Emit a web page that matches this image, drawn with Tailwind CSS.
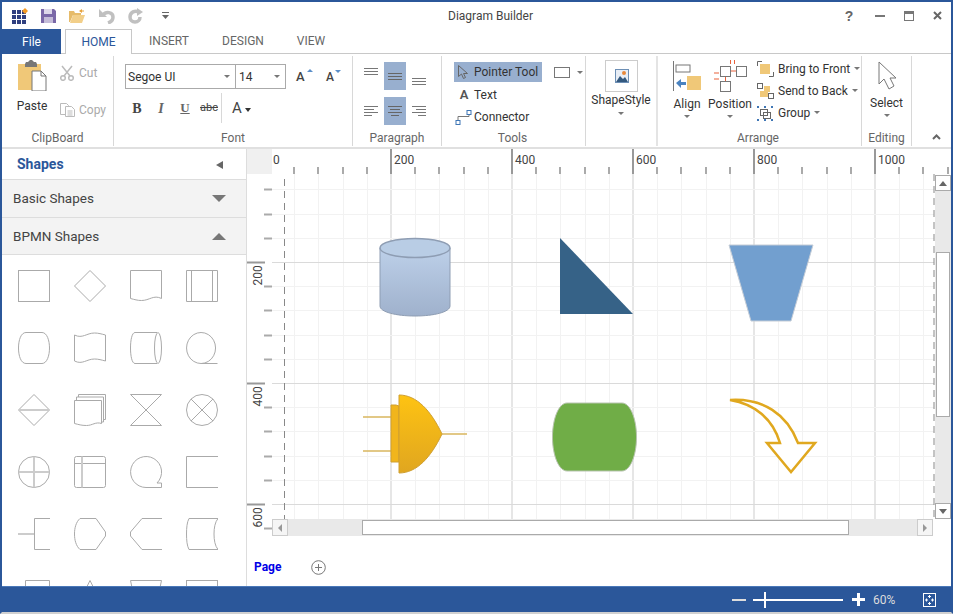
<!DOCTYPE html>
<html lang="en">
  <head>
    <meta charset="UTF-8" />
    <title>Diagram Builder</title>
    <script src="https://cdn.jsdelivr.net/npm/@tailwindcss/browser@4"></script>
  </head>
  <body class="bg-white">
    <div class="w-[953px] h-[614px] border-2 border-[#2b579a] border-b-[#d0d0d0] flex flex-col overflow-hidden font-['Roboto',sans-serif] text-[12px] text-[#444] bg-white">
      <!-- title bar -->
      <div class="h-[27px] flex items-center relative shrink-0">
        <div class="flex items-center pl-[10px] gap-[13px]">
          <svg width="16" height="16" viewBox="0 0 16 16">
            <g fill="#2f3f7f">
              <rect x="0" y="2" width="4" height="4"/><rect x="5" y="2" width="4" height="4"/><rect x="10" y="2" width="4" height="4"/>
              <rect x="0" y="7" width="4" height="4"/><rect x="5" y="7" width="4" height="4"/><rect x="10" y="7" width="4" height="4"/>
              <rect x="0" y="12" width="4" height="4"/><rect x="5" y="12" width="4" height="4"/><rect x="10" y="12" width="4" height="4"/>
            </g>
            <path d="M13 0l3 3-3 3-3-3z" fill="#f59a23"/>
          </svg>
          <svg width="15" height="15" viewBox="0 0 15 15"><path d="M0 1h13l2 2v12H0z" fill="#7a68a8"/><rect x="3" y="1" width="8" height="5" fill="#ddd8ea"/><rect x="3" y="9" width="9" height="6" fill="#c4bcd8"/></svg>
          <svg width="16" height="14" viewBox="0 0 16 14"><path d="M0 2h5l1 2h6v2H4L1 13H0z" fill="#e6bb6a"/><path d="M4 6h12l-3 8H1z" fill="#f2cf8a"/><path d="M10 2l3-2v1.500h2v1h-2V4z" fill="#e6a23c"/></svg>
          <svg width="17" height="16" viewBox="0 0 17 16" fill="none" stroke="#c0c0c0" stroke-width="3.500"><path d="M5 7c3-4 10-3 10 2 0 3-2 5-5 6"/><path d="M1 1v8h8z" fill="#c0c0c0" stroke="none"/></svg>
          <svg width="16" height="16" viewBox="0 0 16 16" fill="none" stroke="#c0c0c0" stroke-width="3.500"><path d="M11 4C7 2 2 4 2 9c0 3 2 5 5 5s5-2 5-5"/><path d="M9 0v8l6-4z" fill="#c0c0c0" stroke="none"/></svg>
          <svg class="ml-[5px]" width="7" height="7" viewBox="0 0 7 7"><rect y="0" width="7" height="1" fill="#666"/><path d="M0 3h7L3.500 7z" fill="#666"/></svg>
        </div>
        <div class="absolute left-[446px] top-[6px] text-[#444] leading-4">Diagram Builder</div>
        <div class="ml-auto flex items-center pr-[9px]">
          <span class="w-[10px] text-center font-bold text-[14px] text-[#666] leading-none font-['Liberation_Sans',sans-serif] mr-[21px]">?</span>
          <span class="w-[10px] h-[2px] bg-[#777] mr-[19px]"></span>
          <span class="w-[10px] h-[10px] border border-[#777] border-t-[3px] mr-[19px]"></span>
          <svg width="9" height="9" viewBox="0 0 9 9" stroke="#666" stroke-width="2"><path d="M1 1l7 7M8 1l-7 7"/></svg>
        </div>
      </div>
      <!-- tabs -->
      <div class="h-[25px] flex items-stretch shrink-0 border-b border-[#c8c8c8] text-[#666]">
        <div class="w-[59px] -mb-px bg-[#2b579a] text-white flex items-center justify-center">File</div>
        <div class="ml-[4px] w-[67px] -mb-px bg-white border border-b-0 border-[#c8c8c8] text-[#2b579a] flex items-center justify-center">HOME</div>
        <div class="ml-[16px] w-[42px] flex items-center justify-center">INSERT</div>
        <div class="ml-[31px] w-[44px] flex items-center justify-center">DESIGN</div>
        <div class="ml-[30px] w-[32px] flex items-center justify-center">VIEW</div>
      </div>
      <!-- ribbon -->
      <div class="h-[95px] shrink-0 flex border-b-2 border-[#e0e0e0] pt-[2px]">
        <!-- clipboard -->
        <div class="w-[112px] border-r border-[#d8d8d8] flex flex-col mb-px">
          <div class="flex-1 flex pl-[12px] pt-[4px]">
            <div class="w-[36px] flex flex-col items-center">
              <svg width="30" height="31" viewBox="0 0 30 31">
                <path d="M1 4h23v26H1z" fill="#f0c878"/>
                <path d="M8 4l1-2h2l2-2h2l2 2h2l1 2v3H8z" fill="#777"/>
                <path d="M15 11h9l5 5v15H15z" fill="#fff" stroke="#777"/>
                <path d="M24 11v5h5" fill="none" stroke="#777"/>
              </svg>
              <span class="mt-[6px] text-[#333]">Paste</span>
            </div>
            <div class="ml-[10px] flex flex-col text-[#aaa]">
              <div class="flex items-center gap-[4px] mt-[4px] h-[18px]">
                <svg width="15" height="16" viewBox="0 0 15 16" fill="none" stroke="#bbb" stroke-width="1.500"><path d="M2 1l8 10M12 1L4 11"/><circle cx="3" cy="13" r="2.300"/><circle cx="11" cy="13" r="2.300"/></svg>
                <span>Cut</span>
              </div>
              <div class="flex items-center gap-[4px] mt-[19px] h-[18px]">
                <svg width="15" height="14" viewBox="0 0 15 14" fill="#fff" stroke="#bbb"><path d="M.5.500h6l2 2v9h-8z"/><path d="M5.500 3.500h6l3 3v7h-9z"/><path d="M7.500 8h5M7.500 10h5M7.500 12h5" fill="none"/></svg>
                <span>Copy</span>
              </div>
            </div>
          </div>
          <div class="h-[18px] leading-[20px] text-center text-[#666]">ClipBoard</div>
        </div>
        <!-- font -->
        <div class="w-[239px] border-r border-[#d8d8d8] flex flex-col mb-px pl-[11px]">
          <div class="flex-1">
            <div class="flex items-center mt-[8px]">
              <div class="w-[111px] h-[25px] border border-[#aaa] flex items-center pl-[2px] pr-[5px] justify-between text-[#333]">
                <span>Segoe UI</span><span class="w-0 h-0 border-x-[3px] border-x-transparent border-t-[3px] border-t-[#777]"></span>
              </div>
              <div class="w-[50px] h-[25px] border border-l-0 border-[#aaa] flex items-center pl-[3px] pr-[5px] justify-between text-[#333]">
                <span>14</span><span class="w-0 h-0 border-x-[3px] border-x-transparent border-t-[3px] border-t-[#777]"></span>
              </div>
              <div class="ml-[10px] relative w-[14px] text-[13px] text-[#444] font-medium leading-none">A<span class="absolute -right-[3px] -top-[1px] w-0 h-0 border-x-[3px] border-x-transparent border-b-[3px] border-b-[#5b8fc9]"></span></div>
              <div class="ml-[16px] relative w-[12px] text-[12px] text-[#444] font-medium leading-none">A<span class="absolute -right-[3px] -top-[1px] w-0 h-0 border-x-[3px] border-x-transparent border-t-[3px] border-t-[#5b8fc9]"></span></div>
            </div>
            <div class="flex items-center mt-[4px] h-[30px] font-['Liberation_Serif',serif]">
              <div class="w-[12px] ml-[6px] text-center font-bold text-[14px] text-[#444]">B</div>
              <div class="w-[12px] ml-[12px] text-center font-bold italic text-[14px] text-[#666]">I</div>
              <div class="w-[12px] ml-[12px] text-center font-bold underline text-[13px] text-[#666]">U</div>
              <div class="w-[18px] ml-[9px] text-center line-through text-[11px] text-[#444] font-['Roboto',sans-serif]">abc</div>
              <div class="h-[30px] w-px bg-[#d8d8d8] ml-[3px]"></div>
              <div class="ml-[10px] text-[15px] text-[#444] font-['Roboto',sans-serif]">A</div>
              <span class="ml-[3px] mt-[3px] w-0 h-0 border-x-[3px] border-x-transparent border-t-[4px] border-t-[#333]"></span>
            </div>
          </div>
          <div class="h-[18px] leading-[20px] text-center text-[#666] -ml-[11px]">Font</div>
        </div>
        <!-- paragraph -->
        <div class="w-[89px] border-r border-[#d8d8d8] flex flex-col mb-px">
          <div class="flex-1 grid grid-cols-[20px_22px_20px] grid-rows-[28px_28px] gap-x-[3px] gap-y-[7px] pl-[8px] pt-[6px] justify-start">
            <div class="flex items-start justify-center pt-[6px]"><svg width="14" height="7" stroke="#777"><path d="M0 .5h14M0 3.500h14M0 6.500h14"/></svg></div>
            <div class="bg-[#98afcf] flex items-center justify-center"><svg width="14" height="7" stroke="#666"><path d="M0 .5h14M0 3.500h14M0 6.500h14"/></svg></div>
            <div class="flex items-end justify-center pb-[5px]"><svg width="14" height="7" stroke="#777"><path d="M0 .5h14M0 3.500h14M0 6.500h14"/></svg></div>
            <div class="flex items-center justify-center"><svg width="14" height="10" stroke="#777"><path d="M0 .5h14M0 3.500h10M0 6.500h14M0 9.500h8"/></svg></div>
            <div class="bg-[#98afcf] flex items-center justify-center"><svg width="14" height="10" stroke="#666"><path d="M0 .5h14M2 3.500h10M0 6.500h14M3 9.500h8"/></svg></div>
            <div class="flex items-center justify-center"><svg width="14" height="10" stroke="#777"><path d="M0 .5h14M4 3.500h10M0 6.500h14M6 9.500h8"/></svg></div>
          </div>
          <div class="h-[18px] leading-[20px] text-center text-[#666]">Paragraph</div>
        </div>
        <!-- tools -->
        <div class="w-[144px] border-r border-[#d8d8d8] flex flex-col mb-px">
          <div class="flex-1 pl-[12px] pt-[6px] text-[#333]">
            <div class="flex items-center">
              <div class="w-[88px] h-[20px] bg-[#98afcf] flex items-center pl-[4px]">
                <svg width="10" height="14" viewBox="0 0 10 14" fill="none" stroke="#666"><path d="M.5.5v11l3-2.500 2 4.500 2-1-2-4h4z"/></svg>
                <span class="ml-[6px]">Pointer Tool</span>
              </div>
              <div class="ml-[12px] w-[16px] h-[11px] border border-[#777]"></div>
              <span class="ml-[7px] w-0 h-0 border-x-[3px] border-x-transparent border-t-[3px] border-t-[#777]"></span>
            </div>
            <div class="flex items-center h-[22px] mt-[2px]">
              <span class="w-[20px] text-center font-semibold text-[#555] text-[13px]">A</span>
              <span>Text</span>
            </div>
            <div class="flex items-center h-[22px]">
              <svg class="w-[20px]" width="17" height="15" viewBox="0 0 17 15" fill="#fff" stroke="#3f76b5"><path d="M2.500 10V6.500h11V3" fill="none" stroke="#777"/><rect x="11.500" y=".5" width="4" height="4"/><rect x=".5" y="10.500" width="4" height="4"/></svg>
              <span>Connector</span>
            </div>
          </div>
          <div class="h-[18px] leading-[20px] text-center text-[#666] pr-[2px]">Tools</div>
        </div>
        <!-- shape style -->
        <div class="w-[72px] border-r-2 border-[#e4e4e4] flex flex-col items-center mb-px pt-[4px]">
          <div class="w-[33px] h-[32px] border border-[#ccc] flex items-center justify-center ml-[1px]">
            <svg width="14" height="14" viewBox="0 0 14 14"><rect x=".5" y=".5" width="13" height="13" fill="#e8eef6" stroke="#6d8fb5"/><path d="M1 13l4-6 3 3 2-2 3 5z" fill="#33597f"/><circle cx="9" cy="4" r="2" fill="#e8883a"/></svg>
          </div>
          <span class="mt-px text-[#333] leading-[15px] whitespace-nowrap">ShapeStyle</span>
          <span class="mt-[4px] w-0 h-0 border-x-[3px] border-x-transparent border-t-[3px] border-t-[#777]"></span>
        </div>
        <!-- arrange -->
        <div class="w-[204px] border-r border-[#d8d8d8] flex flex-col mb-px">
          <div class="flex-1 flex pl-[14px] pt-[4px] text-[#333]">
            <div class="w-[30px] flex flex-col items-center">
              <svg width="28" height="32" viewBox="0 0 28 32">
                <path d="M.5 1v30" stroke="#777" fill="none"/>
                <rect x="3" y="5" width="14" height="7" fill="#fff" stroke="#777"/>
                <rect x="14" y="16" width="14" height="14" fill="#f0c878"/>
                <path d="M3 23l5-4v3h5v3H8v3z" fill="#4a83c0"/>
              </svg>
              <span class="leading-[17px] mt-[4px]">Align</span>
              <span class="mt-[2px] w-0 h-0 border-x-[3px] border-x-transparent border-t-[3px] border-t-[#777]"></span>
            </div>
            <div class="w-[44px] ml-[6px] flex flex-col items-center">
              <svg width="34" height="32" viewBox="0 0 34 32" fill="#fff" stroke="#777">
                <rect x="7.500" y="6.500" width="10" height="10"/>
                <rect x="23.500" y="6.500" width="10" height="10"/>
                <rect x="7.500" y="21.500" width="10" height="10"/>
                <path d="M18 11h5M12.500 17v4" fill="none" stroke="#e8603a"/>
                <path d="M17.500 0v4M21.500 0v4M1 13h5M1 19h5" fill="none" stroke="#e8603a"/>
              </svg>
              <span class="leading-[17px] mt-[4px]">Position</span>
              <span class="mt-[2px] w-0 h-0 border-x-[3px] border-x-transparent border-t-[3px] border-t-[#777]"></span>
            </div>
            <div class="ml-[5px] flex flex-col -mt-[2px]">
              <div class="flex items-center h-[22px] whitespace-nowrap">
                <svg width="17" height="16" viewBox="0 0 17 16" fill="none" stroke="#666"><path d="M.5 5V.5H5M16.500 11v4.500H12"/><rect x="3" y="3" width="10" height="10" fill="#f0c878" stroke="none"/></svg>
                <span class="ml-[4px]">Bring to Front</span>
                <span class="ml-[4px] mb-[2px] w-0 h-0 border-x-[3px] border-x-transparent border-t-[3px] border-t-[#777]"></span>
              </div>
              <div class="flex items-center h-[22px] whitespace-nowrap">
                <svg width="17" height="16" viewBox="0 0 17 16" fill="#fff" stroke="#666"><rect x=".5" y=".5" width="5" height="5"/><rect x="11.500" y="10.500" width="5" height="5"/><rect x="7" y="3" width="6" height="6" fill="#f0c878" stroke="none"/><rect x="3" y="8" width="8" height="6" fill="#f0c878" stroke="none"/></svg>
                <span class="ml-[4px]">Send to Back</span>
                <span class="ml-[4px] mb-[2px] w-0 h-0 border-x-[3px] border-x-transparent border-t-[3px] border-t-[#777]"></span>
              </div>
              <div class="flex items-center h-[22px] whitespace-nowrap">
                <svg width="16" height="15" viewBox="0 0 16 15" fill="none" stroke="#666"><rect x="3.500" y="3.500" width="7" height="6"/><rect x="6.500" y="6.500" width="7" height="6"/><g fill="#3f76b5" stroke="none"><rect width="2" height="2"/><rect x="14" width="2" height="2"/><rect y="13" width="2" height="2"/><rect x="14" y="13" width="2" height="2"/><rect x="7" width="2" height="2"/><rect x="7" y="13" width="2" height="2"/></g></svg>
                <span class="ml-[5px]">Group</span>
                <span class="ml-[4px] mb-[2px] w-0 h-0 border-x-[3px] border-x-transparent border-t-[3px] border-t-[#777]"></span>
              </div>
            </div>
          </div>
          <div class="h-[18px] leading-[20px] text-center text-[#666] -ml-[3px]">Arrange</div>
        </div>
        <!-- editing -->
        <div class="w-[50px] border-r border-[#d8d8d8] flex flex-col items-center mb-px pt-[5px] text-[#333]">
          <svg width="20" height="30" viewBox="0 0 20 30" fill="#fff" stroke="#777"><path d="M2 1v22l5-5 5 10 5-3-4-8h6z"/></svg>
          <span class="leading-[17px] mt-[4px]">Select</span>
          <span class="mt-[2px] w-0 h-0 border-x-[3px] border-x-transparent border-t-[3px] border-t-[#777]"></span>
          <span class="mt-auto h-[18px] leading-[20px] text-[#666]">Editing</span>
        </div>
        <div class="flex-1 flex items-end justify-end pr-[10px] pb-[7px]">
          <svg width="9" height="6" viewBox="0 0 9 6" fill="none" stroke="#666" stroke-width="2"><path d="M1 5l3.500-3.500L8 5"/></svg>
        </div>
      </div>
      <!-- body -->
      <div class="flex-1 flex min-h-0">
        <!-- shapes panel -->
        <div class="w-[245px] shrink-0 border-r border-[#ddd] flex flex-col overflow-hidden">
          <div class="h-[30px] shrink-0 flex items-center justify-between pl-[15px] pr-[23px] pt-px">
            <span class="text-[14px] font-bold text-[#2b579a]">Shapes</span>
            <span class="w-0 h-0 border-y-[4px] border-y-transparent border-r-[7px] border-r-[#666]"></span>
          </div>
          <div class="h-[38px] shrink-0 bg-[#f3f3f3] border-t border-[#ddd] flex items-center justify-between pl-[11px] pr-[20px] text-[13.500px] text-[#444]">
            <span>Basic Shapes</span>
            <span class="w-0 h-0 border-x-[7px] border-x-transparent border-t-[7px] border-t-[#777]"></span>
          </div>
          <div class="h-[38px] shrink-0 bg-[#f3f3f3] border-y border-[#ddd] flex items-center justify-between pl-[11px] pr-[20px] text-[13.500px] text-[#444]">
            <span>BPMN Shapes</span>
            <span class="w-0 h-0 border-x-[7px] border-x-transparent border-b-[7px] border-b-[#777]"></span>
          </div>
          <div class="grid grid-cols-[32px_32px_32px_32px] gap-x-[24px] gap-y-[30px] pl-[16px] pt-[15px]">
            <svg width="32" height="32" viewBox="0 0 32 32" fill="none" stroke="#aaa"><rect x=".5" y=".5" width="31" height="31"/></svg>
            <svg width="32" height="32" viewBox="0 0 32 32" fill="none" stroke="#aaa"><path d="M16 .5L31.500 16 16 31.500.5 16z"/></svg>
            <svg width="32" height="32" viewBox="0 0 32 32" fill="none" stroke="#aaa"><path d="M.5.500h31v28c-8-4-12 2-20 2-4 0-7-1-11-2z"/></svg>
            <svg width="32" height="32" viewBox="0 0 32 32" fill="none" stroke="#aaa"><path d="M.5.500h31v31H.5zM5.500.500v31M26.500.500v31"/></svg>

            <svg width="32" height="32" viewBox="0 0 32 32" fill="none" stroke="#aaa"><path d="M8 .5h16c5 0 7.500 8 7.500 15.500S29 31.500 24 31.500H8C3 31.500.5 24 .5 16S3 .5 8 .5z"/></svg>
            <svg width="32" height="32" viewBox="0 0 32 32" fill="none" stroke="#aaa"><path d="M.5 3c8 4 12-2 20-2 4 0 7 1 11 2v26c-4-1-7-2-11-2-8 0-12 6-20 2z"/></svg>
            <svg width="32" height="32" viewBox="0 0 32 32" fill="none" stroke="#aaa"><path d="M5 .5h22M5 31.500h22M5 .5C2 .5.500 8 .5 16S2 31.500 5 31.500"/><ellipse cx="28" cy="16" rx="3.500" ry="15.500"/></svg>
            <svg width="32" height="32" viewBox="0 0 32 32" fill="none" stroke="#aaa"><path d="M15 31.500a14.500 15.500 0 1 1 .1 0H31.500"/></svg>

            <svg width="32" height="32" viewBox="0 0 32 32" fill="none" stroke="#aaa"><path d="M16 .5L31.500 16 16 31.500.5 16z"/><path d="M1 16h30" stroke="#ccc" stroke-width="2"/></svg>
            <svg width="32" height="32" viewBox="0 0 32 32" fill="#fff" stroke="#aaa"><path d="M4.500.5h27v25h-27z"/><path d="M2.500 3h27v25h-27z"/><path d="M.5 6.500h27v23c-6-2-9 2-15 2-5 0-8-1-12-2z"/></svg>
            <svg width="32" height="32" viewBox="0 0 32 32" fill="none" stroke="#aaa"><path d="M.5.500h31l-31 31h31z"/></svg>
            <svg width="32" height="32" viewBox="0 0 32 32" fill="none" stroke="#aaa"><circle cx="16" cy="16" r="15.500"/><path d="M5 5l22 22M27 5L5 27"/></svg>

            <svg width="32" height="32" viewBox="0 0 32 32" fill="none" stroke="#aaa"><circle cx="16" cy="16" r="15.500"/><path d="M16 .5v31M.5 16h31" stroke="#ccc" stroke-width="2"/></svg>
            <svg width="32" height="32" viewBox="0 0 32 32" fill="none" stroke="#aaa"><rect x=".5" y=".5" width="31" height="31" rx="2"/><path d="M.5 7.500h31"/><path d="M8 .5v31" stroke="#ccc" stroke-width="2"/></svg>
            <svg width="32" height="32" viewBox="0 0 32 32" fill="none" stroke="#aaa"><path d="M16 31.500a15.500 15.500 0 1 1 11-4.500h4.500v4.500z"/></svg>
            <svg width="32" height="32" viewBox="0 0 32 32" fill="none" stroke="#aaa"><path d="M32 .5H.5v31H32"/></svg>

            <svg width="32" height="32" viewBox="0 0 32 32" fill="none" stroke="#aaa"><path d="M32 .5H16.500v31H32"/><path d="M0 16h16" stroke="#ccc" stroke-width="2"/></svg>
            <svg width="32" height="32" viewBox="0 0 32 32" fill="none" stroke="#aaa"><path d="M6 .5h16L31.500 14v4L22 31.500H6C2 28 .5 22 .5 16S2 4 6 .5z"/></svg>
            <svg width="32" height="32" viewBox="0 0 32 32" fill="none" stroke="#aaa"><path d="M32 .5H12L.5 14v4L12 31.500h20"/></svg>
            <svg width="32" height="32" viewBox="0 0 32 32" fill="none" stroke="#aaa"><path d="M32 .5H3C1 4 .5 10 .5 16S1 28 3 31.500h29C29 28 28 22 28 16s1-12 4-15.500"/></svg>

            <svg width="32" height="32" viewBox="0 0 32 32" fill="none" stroke="#aaa"><path d="M7.500.5h24v31H7.500z"/></svg>
            <svg width="32" height="32" viewBox="0 0 32 32" fill="none" stroke="#aaa"><path d="M16 .5L31.500 31.500H.5z"/></svg>
            <svg width="32" height="32" viewBox="0 0 32 32" fill="none" stroke="#aaa"><path d="M.5.500h31L25 31H7z"/></svg>
            <svg width="32" height="32" viewBox="0 0 32 32" fill="none" stroke="#aaa"><rect x=".5" y=".5" width="31" height="31"/></svg>
          </div>
        </div>
        <!-- diagram area -->
        <div class="flex-1 flex flex-col min-w-0">
          <div class="relative h-[387px] shrink-0">
            <svg id="canvas" width="704" height="387" viewBox="247 149 704 387" class="bg-white">
              <g id="grid"></g>
              <path d="M284.500 179V519M934 174V519" stroke="#888" stroke-dasharray="7 5" fill="none"/>
              <defs>
                <linearGradient id="cyl" x1="0" y1="0" x2="0" y2="1"><stop offset="0" stop-color="#bdd0e9"/><stop offset="1" stop-color="#9fb1cc"/></linearGradient>
                <linearGradient id="gate" x1="0" y1="0" x2="0" y2="1"><stop offset="0" stop-color="#fec312"/><stop offset="1" stop-color="#e0a620"/></linearGradient>
              </defs>
              <!-- database -->
              <path d="M380 248v58c0 6 16 10 35 10s35-4 35-10v-58z" fill="url(#cyl)" stroke="#8e9db3"/>
              <ellipse cx="415" cy="248" rx="35" ry="9.500" fill="#b9cde5" stroke="#8e9db3" stroke-width="1.500"/>
              <!-- triangle -->
              <path d="M560 238l73 76h-73z" fill="#366287"/>
              <!-- trapezoid -->
              <path d="M729 245h84l-22 76h-40z" fill="#729fcf" stroke="#c4ccd6"/>
              <!-- or gate -->
              <path d="M363 417h28M363 451h28M442 434h25" stroke="#d9b65f" stroke-width="1.500" fill="none"/>
              <path d="M391 405h5l3 1v56h-8z" fill="#f1b51c" stroke="#cf9f30"/>
              <path d="M399 395c18 0 32 16 43 39-11 23-25 39-43 39z" fill="url(#gate)" stroke="#cf9f30"/>
              <!-- rounded barrel -->
              <path d="M567 403h55c8 0 14.500 15 14.500 34s-6.500 34-14.500 34h-55c-8 0-14.500-15-14.500-34s6.500-34 14.500-34z" fill="#70ad47" stroke="#b8c4b0"/>
              <!-- curved arrow -->
              <path d="M730 400c33-2 57 14 68 43h17l-24 29-24-29h13c-7-24-25-39-50-43z" fill="#fff" stroke="#e0a81f" stroke-width="2.500"/>
              <g id="rulers" font-family="Roboto, sans-serif" font-size="12" fill="#444"></g>
            </svg>
            <!-- vertical scrollbar -->
            <div class="absolute right-0 top-[26px] h-[344px] w-[16px] bg-[#e9e9e9] flex flex-col">
              <div class="h-[16px] bg-white border border-[#aaa] flex items-center justify-center"><span class="w-0 h-0 border-x-[4px] border-x-transparent border-b-[5px] border-b-[#666]"></span></div>
              <div class="h-[165px] mt-[61px] mx-px bg-white border border-[#aaa]"></div>
              <div class="h-[16px] mt-auto bg-white border border-[#aaa] flex items-center justify-center"><span class="w-0 h-0 border-x-[4px] border-x-transparent border-t-[5px] border-t-[#666]"></span></div>
            </div>
            <!-- horizontal scrollbar -->
            <div class="absolute left-[25px] bottom-0 h-[17px] w-[661px] bg-[#e9e9e9] flex">
              <div class="w-[16px] bg-[#f5f5f5] border border-[#ccc] flex items-center justify-center"><span class="w-0 h-0 border-y-[4px] border-y-transparent border-r-[4px] border-r-[#999]"></span></div>
              <div class="w-[487px] ml-[74px] my-px bg-white border border-[#aaa]"></div>
              <div class="w-[16px] ml-auto bg-[#f5f5f5] border border-[#ccc] flex items-center justify-center"><span class="w-0 h-0 border-y-[4px] border-y-transparent border-l-[4px] border-l-[#999]"></span></div>
            </div>
          </div>
          <!-- page tabs -->
          <div class="flex-1 flex items-center pl-[7px] pt-[12px]">
            <span class="font-bold text-[#0000e6]">Page</span>
            <svg class="ml-[30px]" width="15" height="15" viewBox="0 0 15 15" fill="none" stroke="#777"><circle cx="7.500" cy="7.500" r="6.800"/><path d="M4 7.500h7M7.500 4v7"/></svg>
          </div>
        </div>
      </div>
      <!-- status bar -->
      <div class="h-[26px] shrink-0 bg-[#2b579a] border-t border-[#4a78b8] flex items-center justify-end text-white pr-[15px]">
        <span class="w-[14px] h-[2px] bg-[#ddd]"></span>
        <div class="ml-[7px] w-[90px] h-[2px] bg-white relative">
          <span class="absolute left-[11px] -top-[7px] w-[2px] h-[16px] bg-white"></span>
        </div>
        <svg class="ml-[9px]" width="13" height="13" viewBox="0 0 13 13" fill="#fff"><path d="M5 0h3v5h5v3H8v5H5V8H0V5h5z"/></svg>
        <span class="ml-[8px] w-[22px] whitespace-nowrap text-[#ddd]">60%</span>
        <svg class="ml-[28px]" width="13" height="14" viewBox="0 0 13 14" fill="none" stroke="#fff"><rect x=".5" y=".5" width="12" height="13"/><path d="M6.500 2v3M5 3.500h3M6.500 9v3M5 10.500h3M2 7h3M3.500 5.500v3M8 7h3M9.500 5.500v3"/></svg>
      </div>
    </div>
    <script>
      // grid lines and ruler marks: 200 units are 121px at 60% zoom
      const NS = "http://www.w3.org/2000/svg";
      const grid = document.getElementById("grid");
      const rulers = document.getElementById("rulers");
      function line(parent, x1, y1, x2, y2, color, width) {
        const l = document.createElementNS(NS, "line");
        l.setAttribute("x1", x1);
        l.setAttribute("y1", y1);
        l.setAttribute("x2", x2);
        l.setAttribute("y2", y2);
        l.setAttribute("stroke", color);
        l.setAttribute("stroke-width", width);
        parent.appendChild(l);
      }
      function label(txt, x, y, rotate) {
        const t = document.createElementNS(NS, "text");
        t.textContent = txt;
        t.setAttribute("x", x);
        t.setAttribute("y", y);
        if (rotate) t.setAttribute("transform", "rotate(-90 " + x + " " + y + ")");
        rulers.appendChild(t);
      }
      for (let i = 1; i < 28; i++) {
        const x = Math.round(270 + 24.2 * i);
        line(grid, i % 5 ? x + 0.5 : x, 174, i % 5 ? x + 0.5 : x, 519, i % 5 ? "#f2f2f2" : "#e6e6e6", i % 5 ? 1 : 2);
      }
      for (let i = 2; i < 16; i++) {
        const y = Math.round(141 + 24.2 * i) + 0.5;
        line(grid, 272, y, 934, y, i % 5 ? "#f2f2f2" : "#dadada", 1);
      }
      // rulers sit over the grid
      rulers.insertAdjacentHTML("beforeend", '<rect x="247" y="149" width="25" height="25" fill="#f0f0f0"/><rect x="272" y="149" width="679" height="25" fill="#fff"/><rect x="247" y="174" width="25" height="362" fill="#fff"/>');
      for (let i = 1; i < 29; i++) {
        const x = Math.round(270 + 24.2 * i);
        if (i % 5) line(rulers, x, 167, x, 174, "#aaa", 2);
        else {
          line(rulers, x, 149, x, 174, "#999", 2);
          label(String(i * 40), x + 3, 164);
        }
      }
      label("0", 273, 164);
      for (let i = 2; i < 17; i++) {
        const y = Math.round(141 + 24.2 * i) + 0.5;
        if (i % 5) line(rulers, 264, y, 272, y, "#aaa", 2);
        else {
          line(rulers, 247, y, 265, y, "#999", 2);
          label(String(i * 40), 262, y + 23, true);
        }
      }
    </script>
  </body>
</html>
